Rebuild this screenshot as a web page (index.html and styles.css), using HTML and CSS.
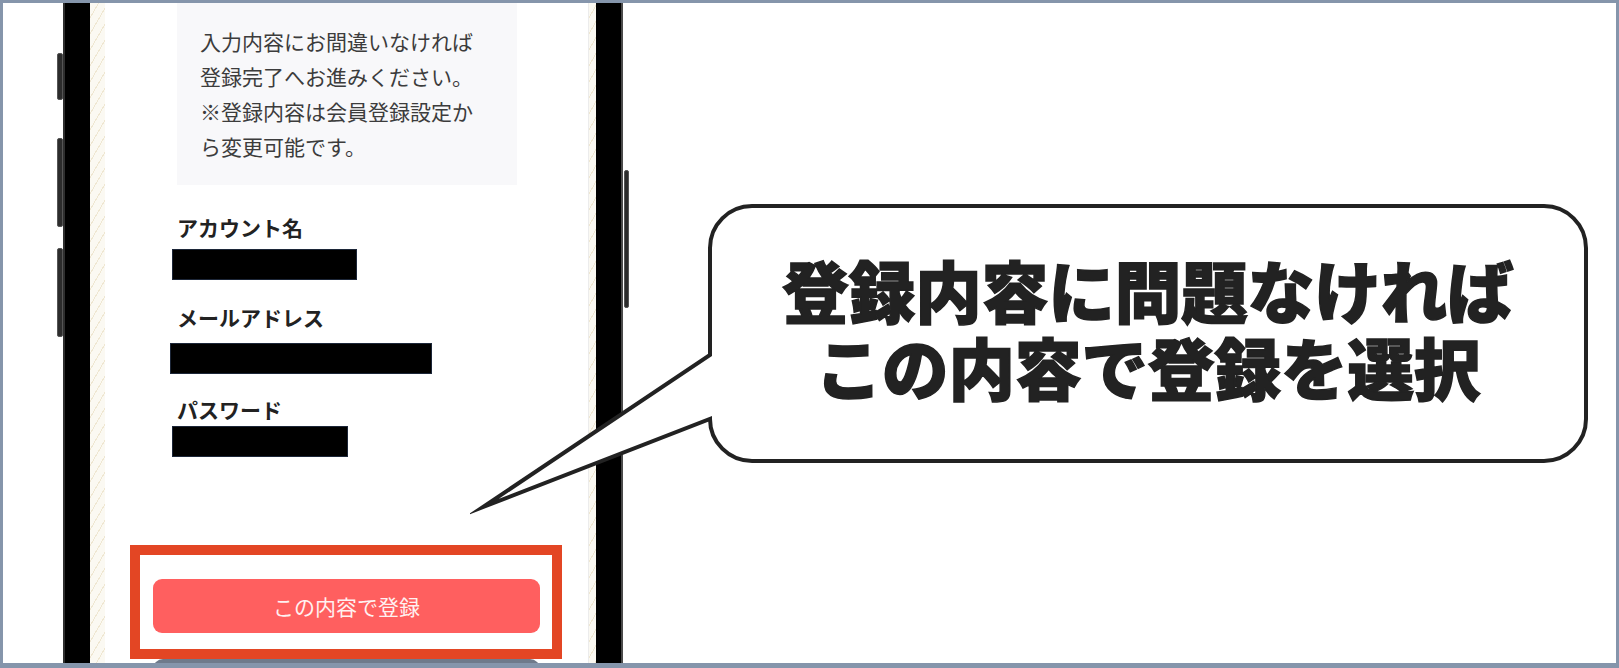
FILE: index.html
```html
<!DOCTYPE html>
<html lang="ja">
<head>
<meta charset="utf-8">
<title>登録内容の確認</title>
<link rel="stylesheet" href="styles.css">
</head>
<body>
<div class="frame">
  <div class="phone">
    <span class="side-btn side-btn--l1"></span>
    <span class="side-btn side-btn--l2"></span>
    <span class="side-btn side-btn--l3"></span>
    <span class="side-btn side-btn--r1"></span>
    <div class="screen">
      <div class="card">
        <div class="notice">入力内容にお間違いなければ<br>登録完了へお進みください。<br>※登録内容は会員登録設定か<br>ら変更可能です。</div>
        <div class="field field--name">
          <div class="field-label">アカウント名</div>
          <div class="redact redact--name"></div>
        </div>
        <div class="field field--mail">
          <div class="field-label">メールアドレス</div>
          <div class="redact redact--mail"></div>
        </div>
        <div class="field field--pass">
          <div class="field-label">パスワード</div>
          <div class="redact redact--pass"></div>
        </div>
        <div class="highlight">
          <button class="submit" type="button">この内容で登録</button>
        </div>
        <div class="back-btn"></div>
      </div>
    </div>
  </div>
  <div class="callout">
    <svg class="callout-shape" width="1130" height="325" viewBox="0 0 1130 325" xmlns="http://www.w3.org/2000/svg">
      <path d="M282 11 H1074 A42 42 0 0 1 1116 53 V224 A42 42 0 0 1 1074 266 H282 A42 42 0 0 1 240 224 L13 312 L240 160 V53 A42 42 0 0 1 282 11 Z" fill="#ffffff" stroke="#222222" stroke-width="4" stroke-linejoin="miter" stroke-miterlimit="10"/>
    </svg>
    <div class="callout-text">
      <div class="callout-line">登録内容に問題なければ</div>
      <div class="callout-line">この内容で登録を選択</div>
    </div>
  </div>
</div>
</body>
</html>
```

FILE: styles.css
```css
* { box-sizing: border-box; }

html, body {
  margin: 0;
  padding: 0;
  background: #ffffff;
}

body {
  width: 1619px;
  height: 668px;
  overflow: hidden;
  font-family: "Noto Sans CJK JP", "Noto Sans", sans-serif;
}

.frame {
  position: relative;
  width: 1619px;
  height: 668px;
  border-style: solid;
  border-color: #8595ab;
  border-width: 3px 3px 5px 3px;
  background: #ffffff;
  overflow: hidden;
  display: flex;
  align-items: flex-start;
}

/* ---------- phone ---------- */
.phone {
  position: relative;
  margin-left: 60px;
  width: 560px;
  height: 660px;
  padding: 0 27px;
  background: #000000;
  box-shadow: inset 2px 0 0 #2e2e2e, inset -2px 0 0 #4a4a4a;
}

.side-btn {
  position: absolute;
  width: 6px;
  background: #2c2c2c;
  border: 1px solid #555;
  border-radius: 2px;
}
.side-btn--l1 { left: -6px; top: 50px; height: 47px; }
.side-btn--l2 { left: -6px; top: 135px; height: 89px; }
.side-btn--l3 { left: -6px; top: 245px; height: 89px; }
.side-btn--r1 { right: -6px; top: 167px; height: 138px; width: 5px; }

.screen {
  height: 660px;
  overflow: hidden;
  display: flex;
  background-color: #fbf9f2;
  background-image: repeating-linear-gradient(120deg, #fbf9f2 0 7px, #efe7d2 7px 8px);
}

.card {
  margin-left: 15px;
  width: 483px;
  background: #ffffff;
  box-shadow: 1px 0 0 #ececec;
}

/* ---------- notice ---------- */
.notice {
  margin: 0 71px 0 72px;
  width: 340px;
  padding: 21px 0 21px 23px;
  background: #f8f8fa;
  color: #3c3c3c;
  font-size: 21px;
  line-height: 35px;
  font-weight: 400;
  white-space: nowrap;
}

/* ---------- fields ---------- */
.field {
  margin-left: 72px;
}
.field--name { margin-top: 28px; }
.field--mail { margin-top: 23px; }
.field--pass { margin-top: 21px; }

.field-label {
  font-size: 21px;
  line-height: 28px;
  font-weight: 700;
  color: #222222;
}

.redact {
  margin-left: -5px;
  height: 31px;
  background: #000000;
  border: 1px solid #1c2638;
}
.redact--name { width: 185px; margin-top: 8px; }
.redact--mail { width: 262px; margin-top: 12px; margin-left: -7px; }
.redact--pass { width: 176px; margin-top: 3px; }

/* ---------- submit ---------- */
.highlight {
  margin: 88px 0 0 25px;
  width: 432px;
  border: 10px solid #e34624;
  padding: 24px 12px 16px 13px;
  background: #ffffff;
}

.submit {
  display: block;
  width: 387px;
  height: 54px;
  border: none;
  border-radius: 9px;
  background: #ff5f5f;
  color: #fff1f1;
  font-family: "Noto Sans CJK JP", "Noto Sans", sans-serif;
  font-size: 21px;
  font-weight: 400;
  line-height: 54px;
  padding: 0;
  text-align: center;
}

.back-btn {
  margin-left: 48px;
  width: 387px;
  height: 30px;
  border-radius: 10px;
  background: #6f7a8b;
}

/* ---------- callout ---------- */
.callout {
  position: absolute;
  left: 467px;
  top: 192px;
  width: 1130px;
  height: 325px;
}

.callout-shape {
  position: absolute;
  left: 0;
  top: 0;
}

.callout-text {
  position: relative;
  margin: 11px 0 0 240px;
  width: 876px;
  height: 255px;
  padding-bottom: 11px;
  display: flex;
  flex-direction: column;
  align-items: center;
  justify-content: center;
  text-align: center;
  color: #222222;
}

.callout-line {
  height: 77px;
  font-size: 66.5px;
  line-height: 77px;
  font-weight: 900;
  -webkit-text-stroke: 1.5px #222222;
  white-space: nowrap;
}
```
